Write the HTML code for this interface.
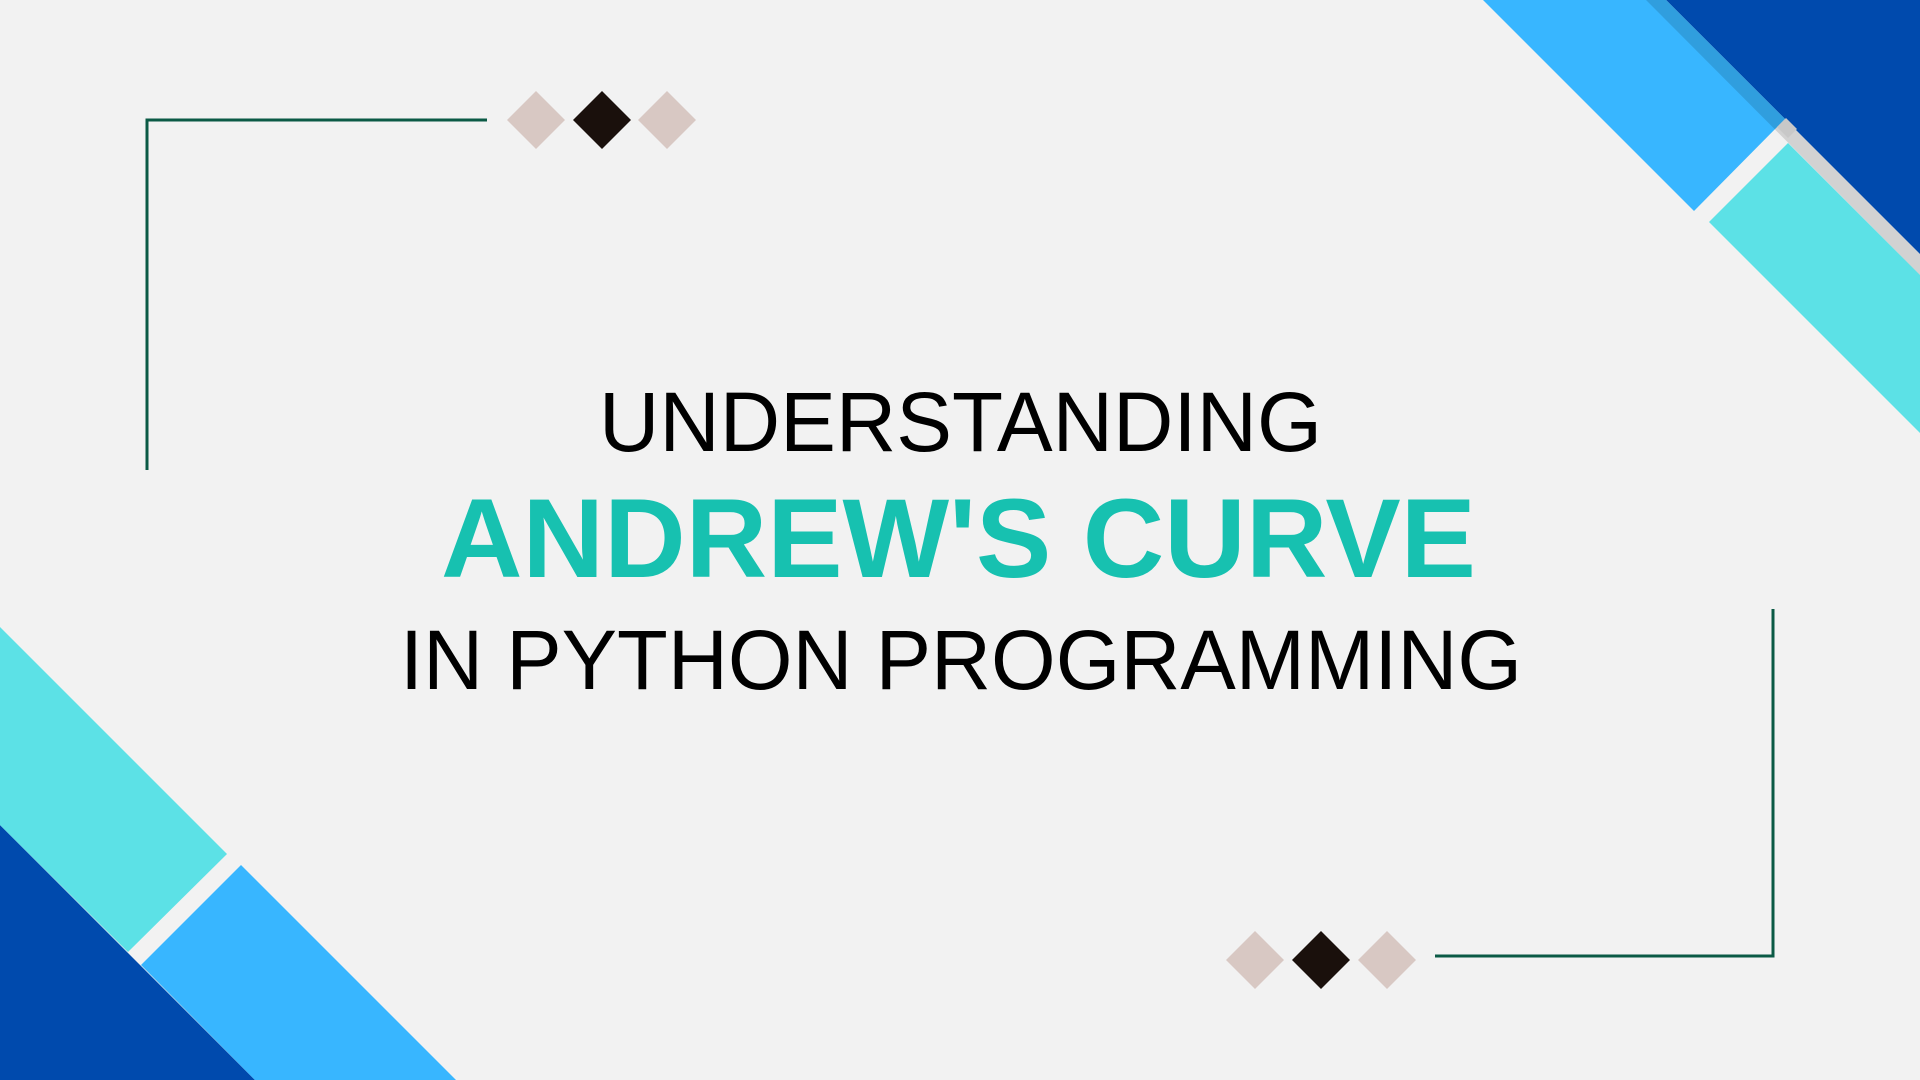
<!DOCTYPE html>
<html><head><meta charset="utf-8"><style>html,body{margin:0;padding:0;background:#f2f2f2;width:1920px;height:1080px;overflow:hidden}</style></head>
<body>
<svg width="1920" height="1080" viewBox="0 0 1920 1080" xmlns="http://www.w3.org/2000/svg">
<rect width="1920" height="1080" fill="#f2f2f2"/>
<polygon points="1666,0 1920,0 1920,254" fill="#004aad"/>
<polygon points="1483,0 1666,0 1785,119 1694,211" fill="#38b6ff"/>
<polygon points="1709,222 1788,143 1920,275 1920,433" fill="#5ce1e6"/>
<polygon points="1646,0 1666,0 1920,254 1920,275" fill="#000" fill-opacity="0.13"/>
<polygon points="1777,127 1786,118 1797,129 1788,138" fill="#c8c8c8"/>
<polygon points="0,825 255,1080 0,1080" fill="#004aad"/>
<polygon points="0,627 227,854 128,952 0,825" fill="#5ce1e6"/>
<polygon points="141,965 241,865 456,1080 255,1080" fill="#38b6ff"/>
<polyline points="487,120 147,120 147,470" fill="none" stroke="#0b5a45" stroke-width="3"/>
<polyline points="1773,609 1773,956 1435,956" fill="none" stroke="#0b5a45" stroke-width="3"/>
<polygon points="536,91 565,120 536,149 507,120" fill="#d8c8c3"/>
<polygon points="602,91 631,120 602,149 573,120" fill="#1a100c"/>
<polygon points="667,91 696,120 667,149 638,120" fill="#d8c8c3"/>
<polygon points="1255,931 1284,960 1255,989 1226,960" fill="#d8c8c3"/>
<polygon points="1321,931 1350,960 1321,989 1292,960" fill="#1a100c"/>
<polygon points="1387,931 1416,960 1387,989 1358,960" fill="#d8c8c3"/>
<text x="599" y="451" font-family="Liberation Sans, sans-serif" font-size="84" fill="#000" textLength="723" lengthAdjust="spacingAndGlyphs">UNDERSTANDING</text>
<text x="441" y="577" font-family="Liberation Sans, sans-serif" font-weight="bold" font-size="112" fill="#17c1b0" textLength="1035" lengthAdjust="spacingAndGlyphs">ANDREW'S CURVE</text>
<text x="400" y="689" font-family="Liberation Sans, sans-serif" font-size="84" fill="#000" textLength="1122" lengthAdjust="spacingAndGlyphs">IN PYTHON PROGRAMMING</text>
</svg>
</body></html>
